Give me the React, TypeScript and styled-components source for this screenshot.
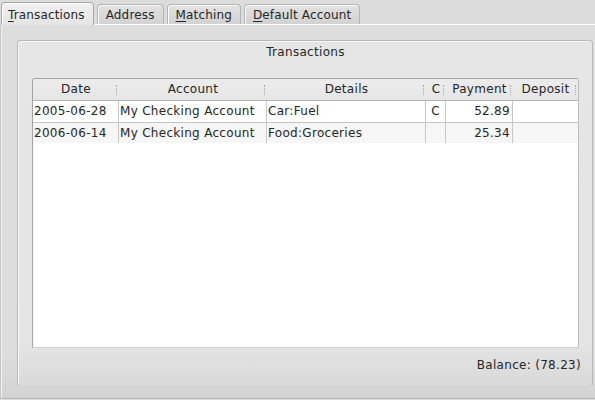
import React from "react";
import styled, { createGlobalStyle } from "styled-components";

const GlobalStyle = createGlobalStyle`
  html, body { margin: 0; padding: 0; }
  body {
    background: #dcdcdc;
    font-family: "DejaVu Sans", "Liberation Sans", sans-serif;
    font-size: 12px;
    letter-spacing: 0.3px;
    color: #262626;
    overflow: hidden;
  }
`;

const Window = styled.div`
  width: 595px;
  height: 400px;
  display: flex;
  flex-direction: column;
  background: #dcdcdc;
  overflow: hidden;
`;

const TabBar = styled.div`
  display: flex;
  align-items: flex-end;
  height: 24px;
  padding-left: 1px;
  gap: 3px;
  box-sizing: border-box;
  position: relative;
  z-index: 1;
`;

const Tab = styled.div<{ $active?: boolean }>`
  box-sizing: border-box;
  height: ${(p) => (p.$active ? "23px" : "20px")};
  margin-bottom: ${(p) => (p.$active ? "-1px" : "0")};
  padding: ${(p) => (p.$active ? "1px 8px 0 6px" : "0 8px")};
  border: 1px solid ${(p) => (p.$active ? "#a9a9a9" : "#b4b4b4")};
  border-bottom: none;
  border-radius: 4px 4px 0 0;
  background: ${(p) =>
    p.$active
      ? "linear-gradient(#f1f1f1, #e4e4e4)"
      : "linear-gradient(#e2e2e2, #d2d2d2)"};
  box-shadow: inset 1px 1px 0 #fafafa;
  display: flex;
  align-items: center;
  line-height: 14px;
  letter-spacing: 0.15px;
  white-space: nowrap;
  u { text-decoration: underline; text-underline-offset: 2px; }
`;

const Pane = styled.div`
  flex: 1;
  display: flex;
  box-sizing: border-box;
  border-top: 1px solid #ffffff;
  border-left: 1px solid #c4c4c4;
  border-bottom: 1px solid #b8b8b8;
  box-shadow: inset 1px 0 0 #f4f4f4;
  padding: 15px 2px 11px 16px;
  background: linear-gradient(#dddddd 0%, #dddddd 88%, #d3d3d3 100%);
  margin-bottom: 1px;
`;

const GroupBox = styled.div`
  flex: 1;
  display: flex;
  flex-direction: column;
  box-sizing: border-box;
  border: 1px solid #b9b9b9;
  border-bottom-color: #d0d0d0;
  border-radius: 4px;
  box-shadow: inset 1px 1px 0 #f7f7f7;
  background: linear-gradient(#e6e6e6 0%, #e4e4e4 88%, #d9d9d9 100%);
  padding: 0 13px 0 14px;
`;

const GroupTitle = styled.div`
  height: 37px;
  box-sizing: border-box;
  padding-top: 3px;
  line-height: 16px;
  text-align: center;
`;

const Table = styled.div`
  height: 270px;
  box-sizing: border-box;
  border: 1px solid #a3a3a3;
  border-bottom-color: #cfcfcf;
  border-right-color: #bdbdbd;
  border-radius: 3px 3px 0 0;
  background: #ffffff;
  overflow: hidden;
`;

const COLS = "86px 148px 159px 20px 67px 1fr";

const HeaderRow = styled.div`
  display: grid;
  grid-template-columns: ${COLS};
  height: 22px;
  box-sizing: border-box;
  background: linear-gradient(#ececec, #e6e6e6);
  border-bottom: 1px solid #b4b4b4;
`;

const HeaderCell = styled.div`
  position: relative;
  text-align: center;
  line-height: 21px;
  white-space: nowrap;
  overflow: hidden;
  &::after {
    content: "";
    position: absolute;
    right: 2px;
    top: 6px;
    height: 10px;
    border-right: 1px dotted #a8a8a8;
  }
`;

const Row = styled.div<{ $alt?: boolean }>`
  display: grid;
  grid-template-columns: ${COLS};
  height: 21px;
  box-sizing: border-box;
  background: ${(p) => (p.$alt ? "#f6f6f6" : "#ffffff")};
  & + & {
    border-top: 1px solid #c6c6c6;
  }
`;

const Cell = styled.div<{ $align?: "left" | "right" | "center"; $last?: boolean }>`
  line-height: 20px;
  white-space: nowrap;
  overflow: hidden;
  text-align: ${(p) => p.$align ?? "left"};
  padding: ${(p) => (p.$align === "right" ? "0 2px 0 0" : p.$align === "center" ? "0" : "0 0 0 1px")};
  border-right: ${(p) => (p.$last ? "none" : "1px solid #c6c6c6")};
`;

const Footer = styled.div`
  flex: 1;
  display: flex;
  justify-content: flex-end;
  align-items: flex-start;
  padding-top: 9px;
  margin-right: -2px;
  line-height: 16px;
`;

type Tx = { date: string; account: string; details: string; c: string; payment: string; deposit: string };

const rows: Tx[] = [
  { date: "2005-06-28", account: "My Checking Account", details: "Car:Fuel", c: "C", payment: "52.89", deposit: "" },
  { date: "2006-06-14", account: "My Checking Account", details: "Food:Groceries", c: "", payment: "25.34", deposit: "" },
];

export default function App() {
  return (
    <>
      <GlobalStyle />
      <Window>
        <TabBar>
          <Tab $active>
            <span><u>T</u>ransactions</span>
          </Tab>
          <Tab>Address</Tab>
          <Tab>
            <span><u>M</u>atching</span>
          </Tab>
          <Tab>
            <span><u>D</u>efault Account</span>
          </Tab>
        </TabBar>
        <Pane>
          <GroupBox>
            <GroupTitle>Transactions</GroupTitle>
            <Table>
              <HeaderRow>
                <HeaderCell>Date</HeaderCell>
                <HeaderCell>Account</HeaderCell>
                <HeaderCell>Details</HeaderCell>
                <HeaderCell>C</HeaderCell>
                <HeaderCell>Payment</HeaderCell>
                <HeaderCell>Deposit</HeaderCell>
              </HeaderRow>
              {rows.map((r, i) => (
                <Row key={i} $alt={i % 2 === 1}>
                  <Cell>{r.date}</Cell>
                  <Cell>{r.account}</Cell>
                  <Cell>{r.details}</Cell>
                  <Cell $align="center">{r.c}</Cell>
                  <Cell $align="right">{r.payment}</Cell>
                  <Cell $align="right" $last>{r.deposit}</Cell>
                </Row>
              ))}
            </Table>
            <Footer>Balance: (78.23)</Footer>
          </GroupBox>
        </Pane>
      </Window>
    </>
  );
}
